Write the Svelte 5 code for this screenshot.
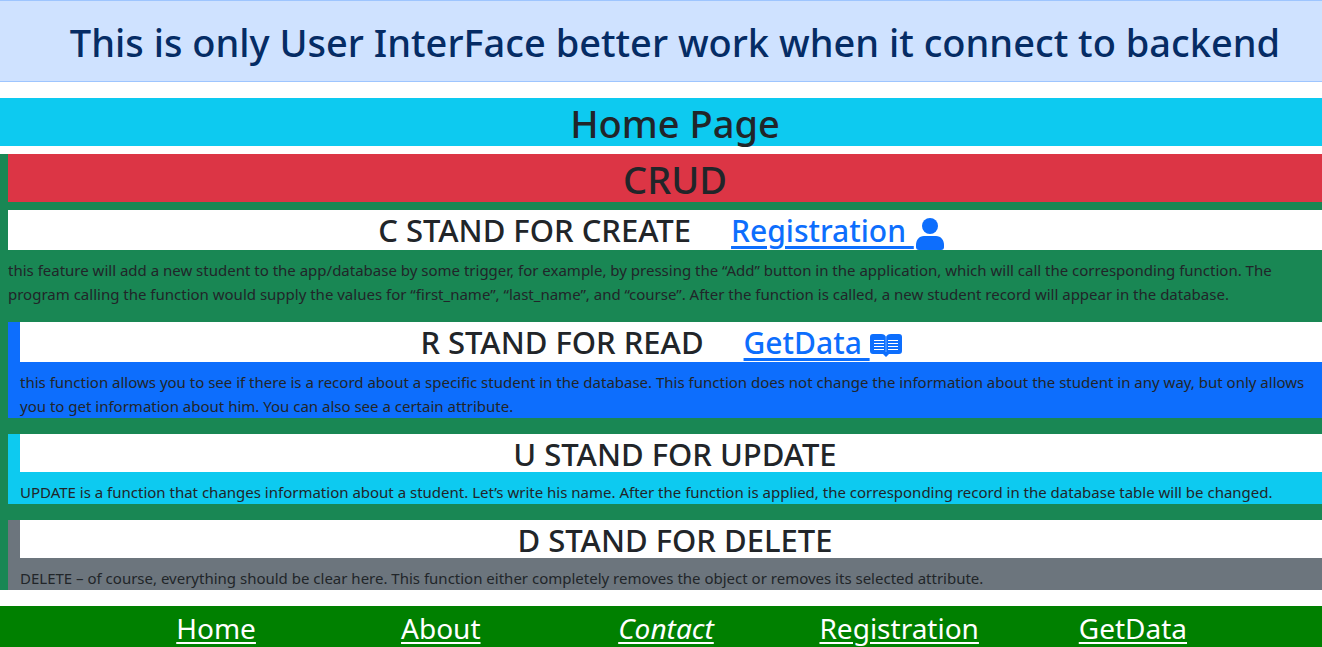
<script>
  const sections = [
    {
      tone: 'read',
      title: 'R STAND FOR READ',
      link: 'GetData',
      text: 'this function allows you to see if there is a record about a specific student in the database. This function does not change the information about the student in any way, but only allows you to get information about him. You can also see a certain attribute.'
    },
    {
      tone: 'update',
      title: 'U STAND FOR UPDATE',
      text: 'UPDATE is a function that changes information about a student. Let’s write his name. After the function is applied, the corresponding record in the database table will be changed.'
    },
    {
      tone: 'delete',
      title: 'D STAND FOR DELETE',
      text: 'DELETE – of course, everything should be clear here. This function either completely removes the object or removes its selected attribute.'
    }
  ];
</script>

<div class="viewport">
  <div class="page">
    <div class="alert" role="alert">
      <h1>This is only User InterFace better work when it connect to backend</h1>
    </div>
    <h1 class="home">Home Page</h1>

    <main>
      <h1 class="crud">CRUD</h1>
      <h2 class="linked">
        C STAND FOR CREATE<a href="#registration">Registration&nbsp;<svg class="person" viewBox="0 0 28 32" aria-hidden="true"><circle cx="14" cy="8" r="8" /><path d="M8 18h12c5 0 8 4 8 9v2c0 2-1 3-3 3H3c-2 0-3-1-3-3v-2c0-5 3-9 8-9z" /></svg></a>
      </h2>
      <p class="intro">
        this feature will add a new student to the app/database by some trigger, for example, by pressing the “Add” button in the application, which will call the corresponding function. The program calling the function would supply the values for “first_name”, “last_name”, and “course”. After the function is called, a new student record will appear in the database.
      </p>

      {#each sections as section}
        <section class={section.tone}>
          <h2 class:linked={section.link}>
            {section.title}{#if section.link}<a href="#getdata">{section.link}&nbsp;<svg class="book" viewBox="0 0 32 23" aria-hidden="true"><path d="M3 0h8c3 0 4 1 5 3 1-2 2-3 5-3h8c2 0 3 1 3 3v14c0 2-1 3-3 3H19l-3 3-3-3H3c-2 0-3-1-3-3V3c0-2 1-3 3-3z" /><path class="lines" d="M4 6.500h10M4 9.500h10M4 12.500h10M4 15.500h10M18 6.500h10M18 9.500h10M18 12.500h10M18 15.500h10" /><path class="fold" d="M16 3v15" /></svg></a>{/if}
          </h2>
          <p>{section.text}</p>
        </section>
      {/each}
    </main>

    <footer>
      <nav>
        <a href="#home">Home</a>
        <a href="#about">About</a>
        <a href="#contact"><i>Contact</i></a>
        <a href="#registration">Registration</a>
        <a href="#getdata">GetData</a>
      </nav>
    </footer>
  </div>
</div>

<style>
  :global(body) {
    margin: 0;
  }
  .viewport {
    overflow: hidden;
    background: #fff;
    color: #212529;
    font: 400 15px/24px 'Segoe UI', 'Noto Sans', 'Open Sans', sans-serif;
  }
  .page {
    width: calc(100% + 28px);
  }
  h1,
  h2,
  p {
    margin: 0;
  }
  h1,
  h2 {
    padding-top: 2px;
    font-weight: 500;
    text-align: center;
    white-space: nowrap;
  }
  h1 {
    font-size: 38px;
    line-height: 46px;
  }
  h2 {
    font-size: 31px;
    line-height: 36px;
    background: #fff;
    margin-bottom: 8px;
  }
  .alert {
    padding: 16px;
    margin-bottom: 16px;
    border: solid #9ec5fe;
    border-width: 1px 0;
    background: #cfe2ff;
    color: #052c65;
  }
  .home {
    background: #0dcaf0;
    margin-bottom: 8px;
  }
  main {
    padding: 0 8px;
    background: #198754;
    margin-bottom: 16px;
  }
  .crud {
    background: #dc3545;
    margin-bottom: 8px;
  }
  .linked {
    box-sizing: border-box;
    height: 40px;
    padding-right: 28px;
  }
  .intro {
    padding-right: 20px;
  }
  h2 a {
    margin-left: 40px;
    font-size: 30px;
    color: #0d6efd;
    text-underline-offset: 4px;
  }
  section {
    margin-top: 16px;
    padding: 0 12px;
  }
  .read {
    background: #0d6efd;
  }
  .update {
    background: #0dcaf0;
  }
  .delete {
    background: #6c757d;
  }
  svg {
    fill: currentColor;
  }
  .person {
    width: 28px;
    height: 32px;
    margin-left: 2px;
    vertical-align: -8px;
  }
  .book {
    width: 32px;
    height: 23px;
    vertical-align: -3px;
  }
  .lines {
    fill: none;
    stroke: #fff;
  }
  .fold {
    fill: none;
    stroke: #fff;
    opacity: 0.4;
  }
  footer {
    padding: 4px 104px 0;
    background: #008000;
  }
  nav {
    display: grid;
    grid-template-columns: 224fr 225fr 225fr 241fr 226fr;
    font-size: 28px;
    line-height: 37px;
    text-align: center;
  }
  nav a {
    color: #fff;
    text-underline-offset: 3px;
  }
</style>
